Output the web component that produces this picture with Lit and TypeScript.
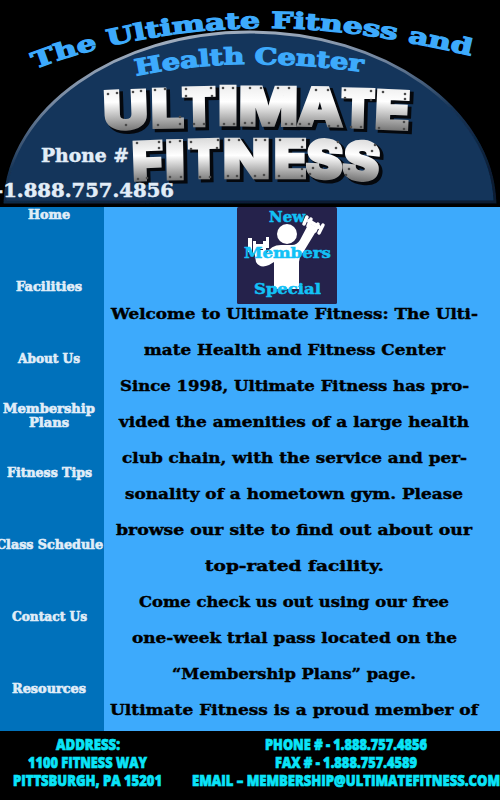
import { LitElement, html, svg, css } from "lit";
import { customElement, property } from "lit/decorators.js";

/** One line of display text, stretched to a set width. */
@customElement("fit-line")
class FitLine extends LitElement {
  @property() text = "";
  @property({ type: Number }) width = 100;
  @property({ type: Number }) height = 18;
  @property({ type: Number }) base = 13;

  static styles = css`
    :host { display: block; flex: none; }
    svg { display: block; overflow: visible; }
    text { fill: currentColor; stroke: currentColor; stroke-width: var(--weight, 0.3px); }
  `;

  render() {
    return html`<svg width=${this.width} height=${this.height}>
      <text x="0" y=${this.base} textLength=${this.width} lengthAdjust="spacingAndGlyphs">${this.text}</text>
    </svg>`;
  }
}

type Line = [string, number];

const NAV: { lines: Line[]; gap: number }[] = [
  { lines: [["Home", 42]], gap: 58 },
  { lines: [["Facilities", 66]], gap: 58 },
  { lines: [["About Us", 62]], gap: 36 },
  { lines: [["Membership", 92], ["Plans", 40]], gap: 36 },
  { lines: [["Fitness Tips", 85]], gap: 58 },
  { lines: [["Class Schedule", 107]], gap: 58 },
  { lines: [["Contact Us", 75]], gap: 58 },
  { lines: [["Resources", 74]], gap: 0 },
];

const COPY: Line[] = [
  ["Welcome to Ultimate Fitness: The Ulti-", 367],
  ["mate Health and Fitness Center", 301],
  ["Since 1998, Ultimate Fitness has pro-", 349],
  ["vided the amenities of a large health", 350],
  ["club chain, with the service and per-", 345],
  ["sonality of a hometown gym. Please", 338],
  ["browse our site to find out about our", 356],
  ["top-rated facility.", 179],
  ["Come check us out using our free", 310],
  ["one-week trial pass located on the", 325],
  ["“Membership Plans” page.", 244],
  ["Ultimate Fitness is a proud member of", 368],
];

const ADDRESS: Line[] = [["ADDRESS:", 64], ["1100 FITNESS WAY", 119], ["PITTSBURGH, PA 15201", 149]];
const CONTACT: Line[] = [
  ["PHONE # - 1.888.757.4856", 162],
  ["FAX # - 1.888.757.4589", 142],
  ["EMAIL – MEMBERSHIP@ULTIMATEFITNESS.COM", 308],
];

/** Logo letters: glyph, x, baseline, advance, tilt in degrees. */
type Plate = [string, number, number, number, number];
const WORD_ONE: Plate[] = [
  ["U", 103, 129, 45, -2], ["L", 151, 127.5, 33, -1], ["T", 182, 126, 34, -1], ["I", 218, 125, 20, 0],
  ["M", 239, 125.5, 59, 0.5], ["A", 297, 126, 46, 1], ["T", 341, 127.5, 34, 1.5], ["E", 375, 129, 35, 2.5],
];
const WORD_TWO: Plate[] = [
  ["F", 132, 180, 31, -2], ["I", 165, 179, 20, -1], ["T", 188, 178, 32, -1], ["N", 223, 177.5, 47, 0],
  ["E", 274, 177.5, 33, 0], ["S", 306, 178.5, 37, 3], ["S", 343, 180, 37, 6],
];

const RIVETS: [number, number][] = [
  [108, 94], [117, 93], [133, 92], [141, 91], [126, 125], [155, 90], [165, 89], [158, 125], [180, 117], [180, 124],
  [186, 89], [211, 88], [186, 96], [212, 96], [194, 124], [204, 124], [223, 88], [233, 88], [224, 124], [234, 124],
  [250, 88], [261, 88], [278, 88], [289, 88], [245, 123], [252, 123], [269, 123], [286, 124], [292, 124], [300, 124], [309, 124],
  [316, 90], [328, 90], [329, 126], [338, 126], [345, 90], [371, 91], [345, 98], [371, 100], [351, 127], [361, 127],
  [383, 92], [405, 94], [405, 99], [379, 128], [404, 122], [404, 129],
  [137, 143], [159, 142], [159, 148], [138, 179], [147, 178], [170, 142], [180, 141], [170, 177], [181, 177],
  [191, 142], [218, 140], [191, 149], [217, 148], [200, 177], [210, 177],
  [229, 140], [239, 140], [256, 140], [265, 140], [228, 176], [237, 176], [255, 176], [264, 175],
  [280, 140], [303, 140], [302, 147], [279, 176], [302, 169], [302, 176],
  [338, 142], [336, 148], [313, 168], [310, 174], [375, 145], [372, 151], [349, 169], [346, 175],
];

@customElement("app-root")
class AppRoot extends LitElement {
  static styles = css`
    :host { display: flex; flex-direction: column; width: 500px; height: 800px; overflow: hidden; background: #000; }
    header { height: 207px; flex: none; }
    header svg { display: block; }
    .deco { font: bold 22.5px "DejaVu Serif", serif; }
    .arc { fill: #3daafc; stroke: #3daafc; stroke-width: 1.2px; }
    .phone { fill: #e2edf8; stroke: #e2edf8; stroke-width: 0.5px; font-size: 19px; }
    .logo { font: 900 53px Inter, "Open Sans", sans-serif; stroke-width: 2.6px; }
    .shade .logo { stroke-width: 4px; }
    main { display: flex; height: 524px; flex: none; }
    nav {
      width: 98px; padding: 1px 6px 0 0; flex: none; display: flex; flex-direction: column;
      background: #0071bb; color: #e0edf8; font: bold 12px "DejaVu Serif", serif; --weight: 0.6px;
    }
    .item { display: flex; flex-direction: column; align-items: center; flex: none; }
    .gap { flex: none; }
    article {
      flex: 1; display: flex; flex-direction: column; align-items: center; padding-right: 16px;
      background: #3daafc; color: #000; font: bold 14.5px "DejaVu Serif", serif; --weight: 0.4px;
    }
    .badge { display: block; margin-left: -14px; flex: none; }
    .badge text { fill: #12c1f6; stroke: #12c1f6; stroke-width: 0.5px; }
    .copy { display: flex; flex-direction: column; align-items: center; margin-top: -7px; }
    footer {
      flex: 1; display: flex; padding-top: 5px; color: #0ae4f8;
      font: 800 15.3px "Open Sans", sans-serif; --weight: 0.7px;
    }
    .col { display: flex; flex-direction: column; align-items: center; flex: none; }
    .left { width: 175px; }
    .right { width: 342px; }
  `;

  private word(plates: Plate[], paint: string) {
    return plates.map(([ch, x, y, w, tilt]) => svg`<text class="logo" x=${x} y=${y} textLength=${w}
      lengthAdjust="spacingAndGlyphs" transform="rotate(${tilt} ${x + w / 2} ${y - 20})" fill=${paint} stroke=${paint}>${ch}</text>`);
  }

  private banner() {
    return html`<svg width="500" height="207" viewBox="0 0 500 207">
      <defs>
        <linearGradient id="m1" gradientUnits="userSpaceOnUse" x1="0" y1="86" x2="0" y2="131">
          <stop offset="0" stop-color="#eee"></stop><stop offset="0.35" stop-color="#fff"></stop><stop offset="1" stop-color="#757575"></stop>
        </linearGradient>
        <linearGradient id="m2" gradientUnits="userSpaceOnUse" x1="0" y1="137" x2="0" y2="183">
          <stop offset="0" stop-color="#d8d8d8"></stop><stop offset="0.4" stop-color="#fff"></stop><stop offset="1" stop-color="#6c6c6c"></stop>
        </linearGradient>
        <linearGradient id="rim" x1="0.3" y1="0" x2="0.7" y2="1">
          <stop offset="0" stop-color="#a9b5c4"></stop><stop offset="0.3" stop-color="#73869f"></stop>
          <stop offset="0.6" stop-color="#173456"></stop><stop offset="1" stop-color="#081a30"></stop>
        </linearGradient>
        <filter id="soft"><feGaussianBlur stdDeviation="0.7"></feGaussianBlur></filter>
        <path id="a1" d="M35 69 C104 42 190 28 265 28 C340 28 410 41 480 58"></path>
        <path id="a2" d="M136 76 C175 68 215 64 250 64 C290 64 325 67 374 73"></path>
      </defs>
      <path d="M5 202 C8 110 115 32 250 32 C385 32 492 110 495 202 Z" fill="#14355b"></path>
      <path d="M5 202 C8 110 115 32 250 32 C385 32 492 110 495 202 Z" fill="none" stroke="url(#rim)" stroke-width="2.8" filter="url(#soft)"></path>
      <text class="deco arc"><textPath href="#a1" textLength="443" lengthAdjust="spacingAndGlyphs">The Ultimate Fitness and</textPath></text>
      <text class="deco arc"><textPath href="#a2" textLength="228" lengthAdjust="spacingAndGlyphs">Health Center</textPath></text>
      <g class="shade" transform="translate(3 2.5)">${this.word(WORD_ONE, "#05080d")}${this.word(WORD_TWO, "#05080d")}</g>
      ${this.word(WORD_ONE, "url(#m1)")}
      ${this.word(WORD_TWO, "url(#m2)")}
      ${RIVETS.map(([x, y]) => svg`<circle cx=${x} cy=${y} r="1.3" fill="#4b4b4b"></circle>`)}
      <text class="deco phone" x="41" y="162" textLength="88" lengthAdjust="spacingAndGlyphs">Phone #</text>
      <text class="deco phone" x="-5" y="197" textLength="179" lengthAdjust="spacingAndGlyphs">-1.888.757.4856</text>
    </svg>`;
  }

  private badge() {
    return html`<svg class="badge" width="100" height="97" viewBox="0 0 100 97">
      <rect width="100" height="97" rx="1.5" fill="#25224b"></rect>
      <g fill="#fff">
        <circle cx="50" cy="27" r="10"></circle>
        <path d="M37 82V55L32 58Q23 62 19 55L17 43H27L29 47Q34 38 44 38H55Q60 38 63 33L72 16L81 21L67 44Q62 50 62 55V82Z"></path>
        <path d="M11 31h4v14h-4zM16 34h3v12h-3zM19 37h7v5h-7zM26 34h3v12h-3zM29 30h3v11h-3z"></path>
      </g>
      <g stroke="#fff" stroke-linecap="round" fill="none">
        <path stroke-width="3.5" d="M70 10L67 17M74 12L71 19M81 17L78 24M86 18L82 26"></path>
        <path stroke-width="4" d="M72 14L82 20"></path>
      </g>
      <text x="32" y="15" textLength="36" lengthAdjust="spacingAndGlyphs">New</text>
      <text x="7" y="51" textLength="87" lengthAdjust="spacingAndGlyphs">Members</text>
      <text x="17" y="87" textLength="67" lengthAdjust="spacingAndGlyphs">Special</text>
    </svg>`;
  }

  private lines(items: Line[], height: number, base: number) {
    return items.map(([t, w]) => html`<fit-line .text=${t} .width=${w} .height=${height} .base=${base}></fit-line>`);
  }

  render() {
    return html`
      <header>${this.banner()}</header>
      <main>
        <nav>
          ${NAV.map((n) => html`<div class="item">${this.lines(n.lines, 14, 11)}</div>
            <div class="gap" style="height:${n.gap}px"></div>`)}
        </nav>
        <article>
          ${this.badge()}
          <div class="copy">${this.lines(COPY, 36, 22)}</div>
        </article>
      </main>
      <footer>
        <div class="col left">${this.lines(ADDRESS, 18, 14)}</div>
        <div class="col right">${this.lines(CONTACT, 18, 14)}</div>
      </footer>
    `;
  }
}
